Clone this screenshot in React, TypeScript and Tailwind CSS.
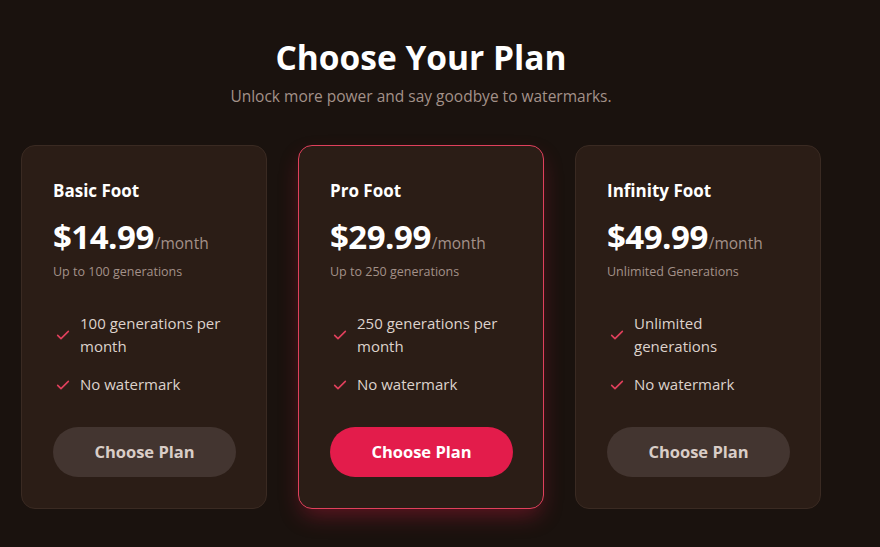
const plans = [
	{ name: "Basic Foot", price: "$14.99", note: "Up to 100 generations", features: ["100 generations per month", "No watermark"], featured: false },
	{ name: "Pro Foot", price: "$29.99", note: "Up to 250 generations", features: ["250 generations per month", "No watermark"], featured: true },
	{ name: "Infinity Foot", price: "$49.99", note: "Unlimited Generations", features: ["Unlimited generations", "No watermark"], featured: false },
];

function Check() {
	return (
		<svg viewBox="0 0 24 24" className="h-[16px] w-[16px] shrink-0" fill="none" stroke="#e0405c" strokeWidth="2.4" strokeLinecap="round" strokeLinejoin="round">
			<path d="M4 12.5l5 5L20 6.5" />
		</svg>
	);
}

export default function App() {
	return (
		<div className="min-h-[547px] w-full bg-[#1a120e] font-['Open_Sans',sans-serif] text-white">
			<div className="ml-[21px] flex w-[800px] flex-col items-center pt-[35px]">
				<h1 className="text-[33.5px] font-bold leading-[44px]">Choose Your Plan</h1>
				<p className="mt-[7px] text-[15.5px] leading-[20px] text-[#a39189]">Unlock more power and say goodbye to watermarks.</p>

				<div className="mt-[39px] grid w-full grid-cols-3 gap-[31px]">
					{plans.map((p) => (
						<div
							key={p.name}
							className={
								p.featured
									? "flex h-[364px] flex-col rounded-[14px] border border-[#e0405c] bg-[#2b1d16] px-[31px] pt-[33px] shadow-[0_10px_22px_-4px_rgba(225,29,72,0.35)]"
									: "flex h-[364px] flex-col rounded-[14px] border border-[#3a2a22] bg-[#2b1d16] px-[31px] pt-[33px]"
							}
						>
							<h2 className="text-[17px] font-bold leading-[24px]">{p.name}</h2>
							<div className="mt-[13px] flex items-baseline">
								<span className="text-[33px] font-bold leading-[42px] tracking-[-0.5px]">{p.price}</span>
								<span className="ml-[1px] text-[15.5px] text-[#a39189]">/month</span>
							</div>
							<p className="mt-[5px] text-[12.5px] leading-[18px] text-[#a39189]">{p.note}</p>

							<ul className="mt-[31px] flex flex-col gap-[15px]">
								{p.features.map((f) => (
									<li key={f} className="flex items-center gap-[9px] pl-[2px]">
										<Check />
										<span className="w-[152px] text-[15px] leading-[23px] text-[#ddd2cc]">{f}</span>
									</li>
								))}
							</ul>

							<button
								className={
									p.featured
										? "mt-[31px] h-[50px] w-[183px] rounded-full bg-[#e31c4b] text-[16.5px] font-bold text-white"
										: "mt-[31px] h-[50px] w-[183px] rounded-full bg-[#433530] text-[16.5px] font-bold text-[#d9cdc7]"
								}
							>
								Choose Plan
							</button>
						</div>
					))}
				</div>
			</div>
		</div>
	);
}
